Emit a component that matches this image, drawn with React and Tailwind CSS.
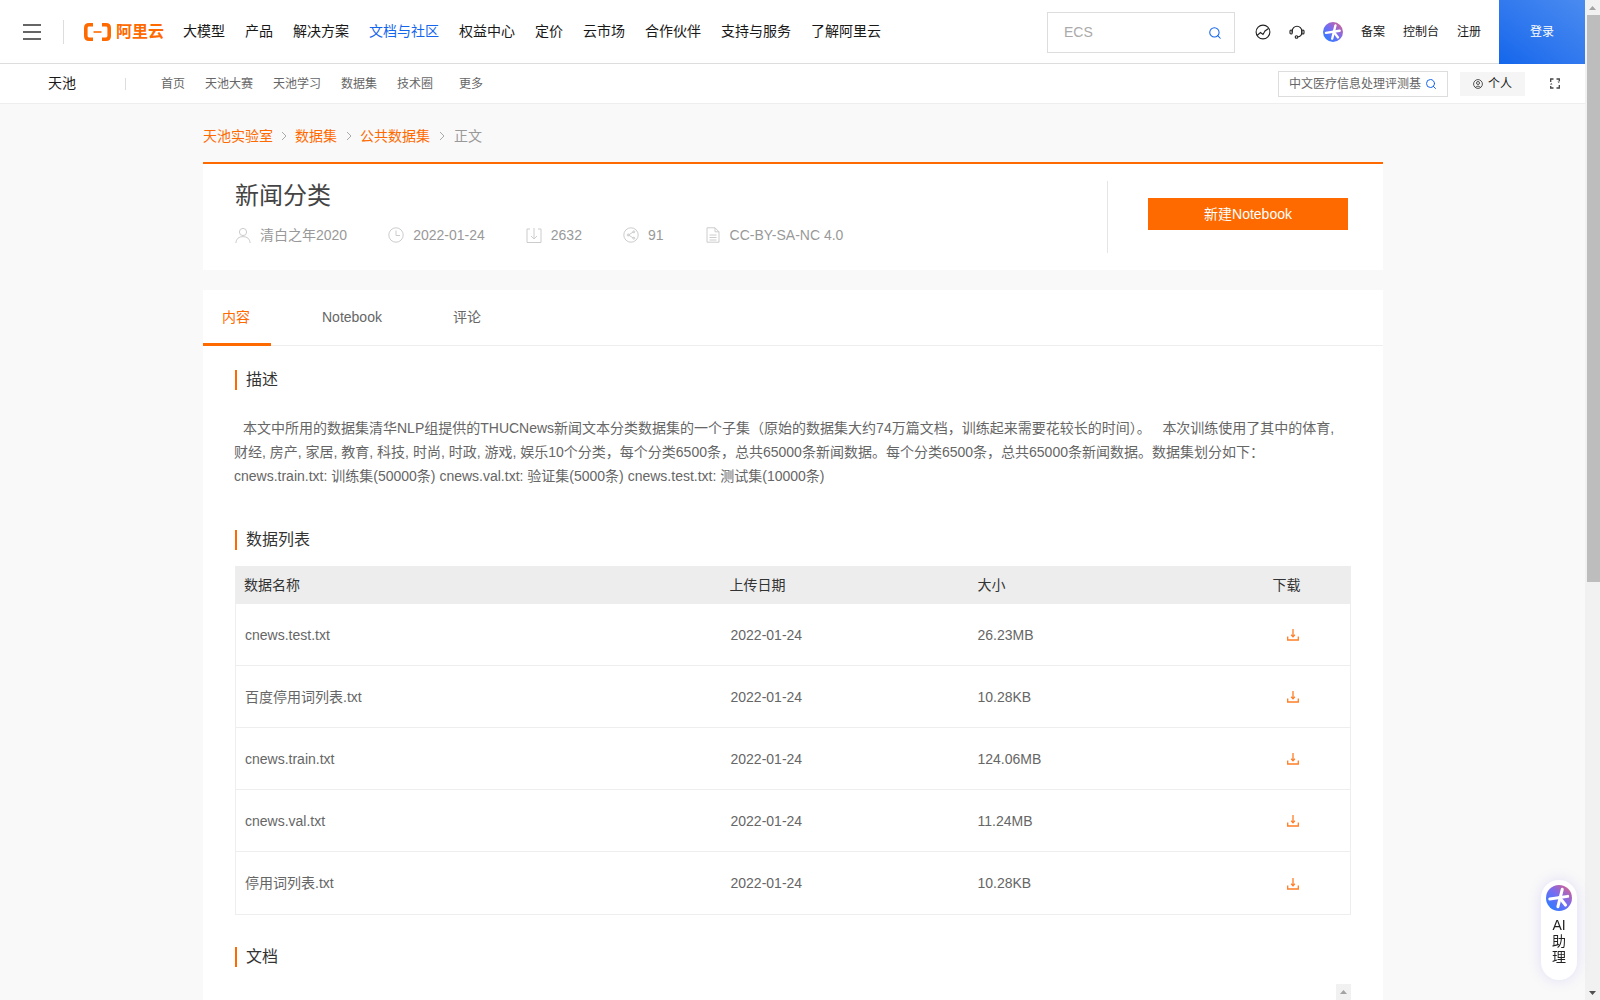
import React, { useId } from "react";
import { Search } from "lucide-react";

const mainNav = ["大模型", "产品", "解决方案", "文档与社区", "权益中心", "定价", "云市场", "合作伙伴", "支持与服务", "了解阿里云"];
const subNav = ["首页", "天池大赛", "天池学习", "数据集", "技术圈"];
const files = [
  { name: "cnews.test.txt", size: "26.23MB" },
  { name: "百度停用词列表.txt", size: "10.28KB" },
  { name: "cnews.train.txt", size: "124.06MB" },
  { name: "cnews.val.txt", size: "11.24MB" },
  { name: "停用词列表.txt", size: "10.28KB" },
];

function AiStar({ className }) {
  const id = useId();
  return (
    <svg viewBox="0 0 24 24" className={className}>
      <defs>
        <linearGradient id={id} x1="0.15" y1="0.9" x2="0.85" y2="0.1">
          <stop offset="0" stopColor="#2f7bff" />
          <stop offset="0.55" stopColor="#7a6cf0" />
          <stop offset="1" stopColor="#c9629a" />
        </linearGradient>
      </defs>
      <circle cx="12" cy="12" r="12" fill={`url(#${id})`} />
      <g stroke="#fff" strokeWidth="2.8" strokeLinecap="round">
        <path d="M3.5 13 L20 10.5" />
        <path d="M15 4 L11 20" />
        <path d="M12.5 11.5 L18 18.5" />
      </g>
    </svg>
  );
}

function Logo() {
  return (
    <div className="flex items-center gap-[5px] text-[#ff6a00]">
      <svg viewBox="0 0 27 18" className="w-[27px] h-[18px]" fill="none" stroke="currentColor">
        <path d="M9 1.8 H5 Q1.8 1.8 1.8 5 V13 Q1.8 16.2 5 16.2 H9" strokeWidth="3.6" />
        <path d="M18 1.8 H22 Q25.2 1.8 25.2 5 V13 Q25.2 16.2 22 16.2 H18" strokeWidth="3.6" />
        <path d="M9.5 9 H17.5" strokeWidth="1.6" />
      </svg>
      <span className="text-[16px] font-bold leading-none">阿里云</span>
    </div>
  );
}

function DownloadIcon() {
  return (
    <svg viewBox="0 0 12 12" className="w-3 h-3" fill="none" stroke="#ff7d26" strokeWidth="1.3">
      <path d="M6 0 V7.5" />
      <path d="M4.2 5.8 L6 7.8 L7.8 5.8" />
      <path d="M0.7 7.5 V11 H11.3 V7.5" />
    </svg>
  );
}

function Chevron({ className }) {
  return (
    <span className={`flex justify-center ${className}`}>
      <svg viewBox="0 0 6 10" className="w-[6px] h-[10px]" fill="none" stroke="#aaa" strokeWidth="1">
        <path d="M1 1 L5 5 L1 9" />
      </svg>
    </span>
  );
}

function Meta({ icon, text }) {
  return (
    <div className="flex items-center gap-[9px] mr-[41px] text-[14px] text-[#999]">
      <svg viewBox="0 0 16 16" className="w-4 h-4" fill="none" stroke="#ccc" strokeWidth="1">
        {icon}
      </svg>
      <span>{text}</span>
    </div>
  );
}

function SectionTitle({ children }) {
  return <h3 className="h-5 border-l-2 border-[#ff6a00] pl-[9px] text-[16px] leading-5 text-[#333]">{children}</h3>;
}

export default function App() {
  return (
    <div className="h-screen overflow-hidden flex bg-[#f9f9f9] font-['Liberation_Sans','Noto_Sans_CJK_SC',sans-serif]">
      <div className="w-[1585px] shrink-0">
        {/* top bar */}
        <header className="h-16 bg-white border-b border-[#ddd] flex items-center pl-[23px]">
          <div className="w-[18px] h-4 flex flex-col justify-between">
            <span className="h-0.5 bg-[#666]" />
            <span className="h-0.5 bg-[#666]" />
            <span className="h-0.5 bg-[#666]" />
          </div>
          <span className="ml-[22px] mr-5 w-px h-6 bg-[#ddd]" />
          <Logo />
          <nav className="ml-[19px] flex gap-5 text-[14px] text-[#181818]">
            {mainNav.map((item) => (
              <a key={item} className={item === "文档与社区" ? "text-[#1366ec]" : ""}>{item}</a>
            ))}
          </nav>
          <div className="ml-auto mt-[2px] w-[188px] h-[41px] border border-[#ddd] flex items-center justify-between pl-4 pr-3 text-[14px] text-[#aaa]">
            ECS
            <Search size={14} strokeWidth={1.8} className="text-[#1366ec]" />
          </div>
          <div className="ml-5 flex items-center gap-[18px] text-[12px] text-[#181818]">
            <svg viewBox="0 0 16 16" className="w-4 h-4" fill="none" stroke="#222" strokeWidth="1.1">
              <circle cx="8" cy="8" r="6.9" />
              <path d="M2 11.5 L5.5 8.5 L8 10.5 L10 7 L13.5 4.5" />
            </svg>
            <svg viewBox="0 0 16 16" className="w-4 h-4" fill="none" stroke="#222" strokeWidth="1.1">
              <path d="M3.2 8.5 V7 A4.8 4.8 0 0 1 12.8 7 V8.5 Q12.8 12.5 8.5 13" />
              <rect x="1" y="6" width="2.2" height="4" rx="1" />
              <rect x="12.8" y="6" width="2.2" height="4" rx="1" />
              <circle cx="7.5" cy="13" r="1.3" />
            </svg>
            <AiStar className="w-5 h-5" />
            <a>备案</a>
            <a>控制台</a>
            <a>注册</a>
            <a className="w-[86px] h-16 -mb-px flex items-center justify-center text-white bg-gradient-to-tr from-[#1366ec] to-[#4a8bf0]">登录</a>
          </div>
        </header>

        {/* sub nav */}
        <div className="h-10 bg-white border-b border-[#eee] flex items-center pl-12 pr-[25px]">
          <span className="text-[14px] text-[#181818]">天池</span>
          <span className="ml-[49px] mr-[35px] w-px h-3 bg-[#ddd]" />
          <nav className="flex gap-5 text-[12px] text-[#666]">
            {subNav.map((item) => (
              <a key={item}>{item}</a>
            ))}
            <a className="ml-[6px]">更多</a>
          </nav>
          <div className="ml-auto w-[170px] h-[26px] border border-[#ddd] flex items-center px-[10px] gap-1 text-[12px] text-[#666]">
            <span className="whitespace-nowrap">中文医疗信息处理评测基</span>
            <Search size={12} strokeWidth={2} className="shrink-0 text-[#1366ec]" />
          </div>
          <div className="ml-3 w-[65px] h-6 bg-[#f5f5f5] flex items-center justify-center gap-[5px] text-[12px] text-[#181818]">
            <svg viewBox="0 0 12 12" className="w-[10px] h-[10px]" fill="none" stroke="#444" strokeWidth="1.1">
              <circle cx="6" cy="6" r="5.3" />
              <circle cx="6" cy="4.8" r="1.8" />
              <path d="M2.8 10 Q6 6.8 9.2 10" />
            </svg>
            个人
          </div>
          <svg viewBox="0 0 10 11" className="ml-[25px] w-[10px] h-[11px]" fill="none" stroke="#444" strokeWidth="1.3">
            <path d="M0.7 4 V1 H3.5" />
            <path d="M9.3 3 V1 H6.5" />
            <path d="M0.7 8 V10 H3.5" />
            <path d="M9.3 7 V10 H6.5" />
            <polygon points="7.5,3.5 10,3.5 8.75,5" fill="#444" stroke="none" />
            <polygon points="0,6.5 2.5,6.5 1.25,5" fill="#444" stroke="none" />
          </svg>
        </div>

        <main className="ml-[203px] w-[1180px]">
          <div className="h-[58px] pt-[6px] flex items-center text-[14px] text-[#ff6a00]">
            <a>天池实验室</a>
            <Chevron className="w-[22px]" />
            <a>数据集</a>
            <Chevron className="w-[23px]" />
            <a>公共数据集</a>
            <Chevron className="w-6" />
            <span className="text-[#999]">正文</span>
          </div>

          {/* title card */}
          <section className="h-[108px] bg-white border-t-2 border-[#ff6a00] flex">
            <div className="pl-8 pt-4">
              <h1 className="text-[24px] leading-8 text-[#444]">新闻分类</h1>
              <div className="mt-[15px] flex h-4 items-center">
                <Meta text="清白之年2020" icon={<><circle cx="8" cy="5" r="3.6" /><path d="M0.8 16 Q1.5 9.6 8 9.6 Q14.5 9.6 15.2 16" /></>} />
                <Meta text="2022-01-24" icon={<><circle cx="8" cy="8" r="7.2" /><path d="M8 3.5 V8.5 H12" /></>} />
                <Meta text="2632" icon={<><path d="M4 2 H1 V15.5 H15 V2 H12" /><path d="M8 1 V12 M5 9 L8 12 L11 9" /></>} />
                <Meta text="91" icon={<><circle cx="8" cy="8" r="7.2" /><path d="M10.5 4.8 L5.5 8 L10.5 11.2" /><circle cx="10.8" cy="4.8" r="1" /><circle cx="5.2" cy="8" r="1" /><circle cx="10.8" cy="11.2" r="1" /></>} />
                <Meta text="CC-BY-SA-NC 4.0" icon={<><path d="M2 0.8 H10 L14 4.8 V15.2 H2 Z" /><path d="M10 0.8 V4.8 H14 M4.5 8 H11.5 M4.5 10.5 H11.5 M4.5 13 H11.5" /></>} />
              </div>
            </div>
            <div className="ml-auto mt-[17px] h-[72px] w-[276px] border-l border-[#e5e5e5] pl-[40px] pt-[17px]">
              <button className="w-[200px] h-8 bg-[#ff6a00] text-white text-[14px]">新建Notebook</button>
            </div>
          </section>

          {/* content card */}
          <section className="mt-5 bg-white">
            <div className="h-14 border-b border-[#eee] flex gap-[31px] text-[14px] text-[#666]">
              <a className="h-14 pl-[19px] pr-[21px] leading-[55px] text-[#ff6a00] border-b-[3px] border-[#ff6a00]">内容</a>
              <a className="px-5 leading-[55px]">Notebook</a>
              <a className="px-5 leading-[55px]">评论</a>
            </div>

            <div className="px-8 pt-6">
              <SectionTitle>描述</SectionTitle>
              <p className="mt-[26px] -ml-px text-[14px] leading-6 text-[#666] whitespace-nowrap">
                <span className="pl-[9px]">本文中所用的数据集清华NLP组提供的THUCNews新闻文本分类数据集的一个子集（原始的数据集大约74万篇文档，训练起来需要花较长的时间）。{"\u00a0\u00a0 "}本次训练使用了其中的体育,</span>
                <br />
                财经, 房产, 家居, 教育, 科技, 时尚, 时政, 游戏, 娱乐10个分类，每个分类6500条，总共65000条新闻数据。每个分类6500条，总共65000条新闻数据。数据集划分如下：
                <br />
                cnews.train.txt: 训练集(50000条) cnews.val.txt: 验证集(5000条) cnews.test.txt: 测试集(10000条)
              </p>

              <div className="mt-[42px]">
                <SectionTitle>数据列表</SectionTitle>
              </div>
              <table className="mt-4 w-full table-fixed border-x border-b border-[#eee] text-[14px] text-[#666]">
                <colgroup>
                  <col className="w-[485px]" />
                  <col className="w-[248px]" />
                  <col className="w-[270px]" />
                  <col />
                </colgroup>
                <thead>
                  <tr className="h-[38px] bg-[#ededed] text-left text-[#333]">
                    <th className="pl-2 font-normal">数据名称</th>
                    <th className="pl-[9px] font-normal">上传日期</th>
                    <th className="pl-[9px] font-normal">大小</th>
                    <th className="pl-[34px] font-normal">下载</th>
                  </tr>
                </thead>
                <tbody>
                  {files.map((f, i) => (
                    <tr
                      key={f.name}
                      className={i === 0 ? "h-[61px] border-b border-[#eee]" : i === files.length - 1 ? "h-[63px]" : "h-[62px] border-b border-[#eee]"}
                    >
                      <td className="pl-[9px] pt-[2px]">{f.name}</td>
                      <td className="pl-[10px] pt-[2px]">2022-01-24</td>
                      <td className="pl-[9px] pt-[2px]">{f.size}</td>
                      <td className="pl-[48px] pt-[2px]"><DownloadIcon /></td>
                    </tr>
                  ))}
                </tbody>
              </table>

              <div className="mt-8">
                <SectionTitle>文档</SectionTitle>
              </div>
              {/* embedded doc viewer, only its scrollbar is in view */}
              <div className="mt-[17px] h-[200px] flex justify-end">
                <div className="w-[15px] bg-[#f1f1f1] flex justify-center pt-[6px]">
                  <svg viewBox="0 0 7 4" className="w-[7px] h-1"><polygon points="3.5,0 7,4 0,4" fill="#a3a3a3" /></svg>
                </div>
              </div>
            </div>
          </section>
        </main>
      </div>

      {/* page scrollbar */}
      <div className="w-[15px] shrink-0 bg-[#f1f1f1] flex flex-col items-end">
        <div className="w-full h-[15px] flex items-center justify-center">
          <svg viewBox="0 0 7 4" className="w-[7px] h-1"><polygon points="3.5,0 7,4 0,4" fill="#a3a3a3" /></svg>
        </div>
        <div className="w-[13px] h-[567px] bg-[#bdbdbd]" />
        <div className="mt-auto w-full h-[15px] flex items-center justify-center">
          <svg viewBox="0 0 7 4" className="w-[7px] h-1"><polygon points="0,0 7,0 3.5,4" fill="#505050" /></svg>
        </div>
      </div>

      {/* floating assistant */}
      <div className="fixed right-[23px] bottom-5 w-9 h-[100px] rounded-full bg-white shadow-[0_0_14px_rgba(110,100,240,0.18)] flex flex-col items-center pt-[5px] text-[14px] leading-4 text-[#222]">
        <AiStar className="w-[26px] h-[26px]" />
        <span className="mt-[6px]">AI</span>
        <span>助</span>
        <span>理</span>
      </div>
    </div>
  );
}
